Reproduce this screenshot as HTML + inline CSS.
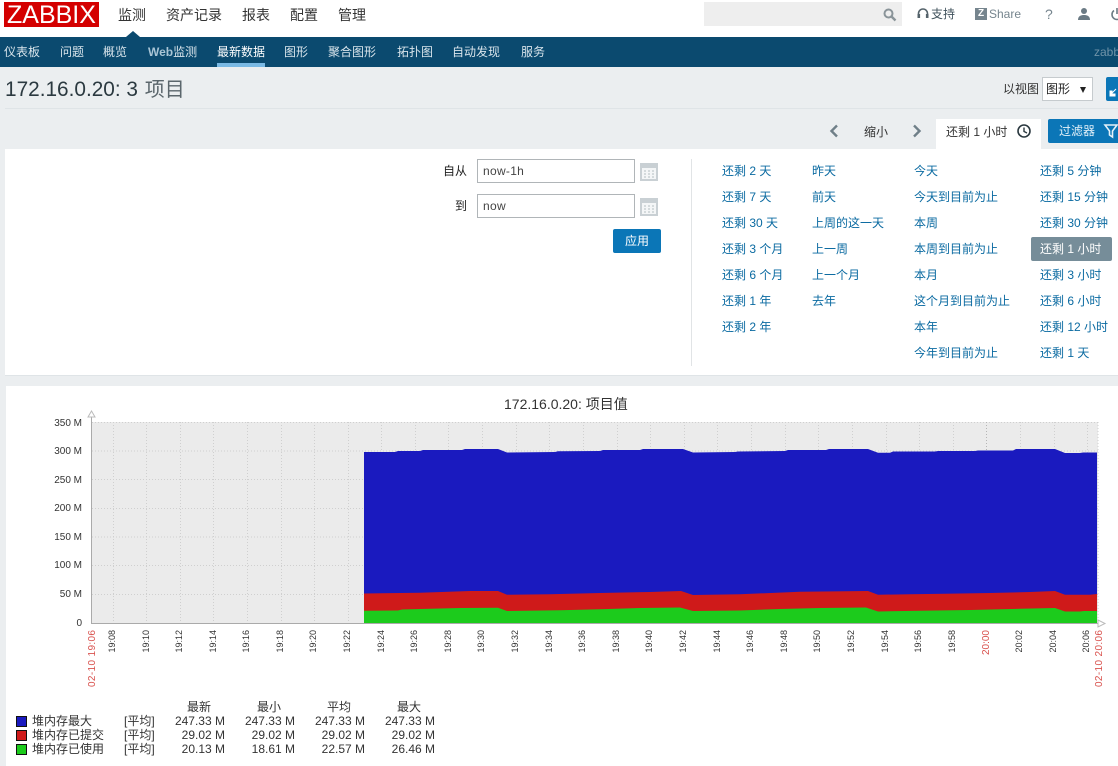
<!DOCTYPE html>
<html lang="zh"><head><meta charset="utf-8"><title>Zabbix</title>
<style>
html,body{margin:0;padding:0}
body{width:1118px;height:766px;overflow:hidden;position:relative;background:#ebeef0;font-family:"Liberation Sans","Noto Sans CJK SC",sans-serif;font-size:12px;color:#1f2c33}
.b{position:absolute}
.t{position:absolute;white-space:nowrap;line-height:16px}
.m{font-size:14px;color:#333;top:7px}
.n{color:#d8e4eb;top:44px}
.l{color:#0a6aa1}
.r{text-align:right;width:70px;color:#333}
svg{position:absolute;overflow:visible}
svg text{font-family:"Liberation Sans",sans-serif}
.i{position:absolute;box-sizing:border-box;background:#fff;border:1px solid #b0b5b8;width:158px;height:24px;left:477px;padding-left:5px;line-height:22px;color:#444;letter-spacing:.3px}
</style></head><body>

<div class="b" style="left:0;top:0;width:1118px;height:37px;background:#fff"></div>
<div class="b" style="left:4px;top:2px;width:95px;height:25px;background:#d40000"></div>
<div class="t" style="left:7px;top:3px;font-size:25px;line-height:25px;color:#fff">ZABBIX</div>
<div class="t m" style="left:118px">监测</div>
<div class="t m" style="left:166px">资产记录</div>
<div class="t m" style="left:242px">报表</div>
<div class="t m" style="left:290px">配置</div>
<div class="t m" style="left:338px">管理</div>

<div class="b" style="left:704px;top:2px;width:198px;height:24px;background:#eee"></div>
<svg style="left:883px;top:8px" width="14" height="14" viewBox="0 0 14 14"><circle cx="5.5" cy="5.5" r="4" fill="none" stroke="#8a9499" stroke-width="2"/><path d="M8.5 8.5L12.5 12.5" stroke="#8a9499" stroke-width="2.4"/></svg>
<svg style="left:917px;top:8px" width="12" height="12" viewBox="0 0 12 12"><path d="M1.5 8V5.5a4.5 4.5 0 0 1 9 0V8" fill="none" stroke="#55636b" stroke-width="1.6"/><rect x="0.5" y="6" width="2.6" height="4" fill="#55636b"/><rect x="8.9" y="6" width="2.6" height="4" fill="#55636b"/></svg>
<div class="t" style="left:931px;top:6px;color:#40525c">支持</div>
<div class="b" style="left:975px;top:8px;width:12px;height:12px;background:#76858e;color:#fff;font-size:10px;line-height:12px;text-align:center;font-weight:bold">Z</div>
<div class="t" style="left:989px;top:6px;color:#76858e">Share</div>
<div class="t" style="left:1045px;top:6px;color:#76858e;font-size:14px">?</div>
<svg style="left:1077px;top:7px" width="14" height="14" viewBox="0 0 14 14"><circle cx="7" cy="4" r="3" fill="#6a7a84"/><path d="M1 13c0-4 3-5 6-5s6 1 6 5z" fill="#6a7a84"/></svg>
<svg style="left:1110px;top:7px" width="14" height="14" viewBox="0 0 14 14"><path d="M4 3.5a5 5 0 1 0 6 0M7 1v6" fill="none" stroke="#6a7a84" stroke-width="1.6"/></svg>

<div class="b" style="left:0;top:37px;width:1118px;height:30px;background:#0b4a6f"></div>
<div class="b" style="left:126px;top:31px;width:0;height:0;border:7px solid transparent;border-top:0;border-bottom:6px solid #0b4a6f"></div>
<div class="t n" style="left:4px">仪表板</div>
<div class="t n" style="left:60px">问题</div>
<div class="t n" style="left:103px">概览</div>
<div class="t n" style="left:148px"><b style="color:#a9c5d6">Web</b>监测</div>
<div class="t n" style="left:217px;color:#fff">最新数据</div>
<div class="b" style="left:217px;top:63px;width:48px;height:4px;background:#7ab9e4"></div>
<div class="t n" style="left:284px">图形</div>
<div class="t n" style="left:328px">聚合图形</div>
<div class="t n" style="left:397px">拓扑图</div>
<div class="t n" style="left:452px">自动发现</div>
<div class="t n" style="left:521px">服务</div>
<div class="t n" style="left:1094px;color:#6f93a8">zabbix</div>

<div class="t" style="left:5px;top:78px;font-size:20.8px;line-height:24px;color:#2b3940">172.16.0.20: 3 <span style="color:#5b666c;font-size:20px;margin-left:1px">项目</span></div>
<div class="b" style="left:5px;top:108px;width:1113px;height:1px;background:#dfe4e7"></div>
<div class="t" style="left:1003px;top:81px;color:#333">以视图</div>
<div class="b" style="left:1042px;top:77px;width:51px;height:24px;box-sizing:border-box;background:#fff;border:1px solid #c6cbce"></div>
<div class="t" style="left:1046px;top:81px;color:#222">图形</div>
<div class="b" style="left:1080px;top:87px;width:0;height:0;border:3.5px solid transparent;border-bottom:0;border-top:6px solid #222"></div>
<div class="b" style="left:1106px;top:77px;width:14px;height:24px;background:#0b76b7;border-radius:2px 0 0 2px"></div>
<svg style="left:1109px;top:89px" width="8" height="8" viewBox="0 0 8 8"><path d="M1 2V7H6V5H3V2zM3 4L7 0" fill="#fff" stroke="#fff"/></svg>

<svg style="left:829px;top:124px" width="10" height="14" viewBox="0 0 10 14"><path d="M8 1.5L2.5 7L8 12.5" fill="none" stroke="#6f7f88" stroke-width="2.4"/></svg>
<div class="t" style="left:864px;top:124px;color:#333">缩小</div>
<svg style="left:912px;top:124px" width="10" height="14" viewBox="0 0 10 14"><path d="M2 1.5L7.5 7L2 12.5" fill="none" stroke="#6f7f88" stroke-width="2.4"/></svg>
<div class="b" style="left:936px;top:119px;width:105px;height:31px;background:#fff"></div>
<div class="t" style="left:946px;top:124px;color:#333">还剩 1 小时</div>
<svg style="left:1017px;top:124px" width="14" height="14" viewBox="0 0 14 14"><circle cx="7" cy="7" r="6" fill="none" stroke="#2b3940" stroke-width="1.6"/><path d="M7 3.5V7.5L10 9" fill="none" stroke="#2b3940" stroke-width="1.4"/></svg>
<div class="b" style="left:1048px;top:119px;width:70px;height:24px;background:#0b76b7;border-radius:2px 0 0 2px"></div>
<div class="t" style="left:1059px;top:123px;color:#e4f1f9">过滤器</div>
<svg style="left:1104px;top:124px" width="14" height="14" viewBox="0 0 14 14"><path d="M1 1H13L8.5 7V13L5.5 11V7z" fill="none" stroke="#e4f1f9" stroke-width="1.6"/></svg>

<div class="b" style="left:5px;top:149px;width:1113px;height:226px;background:#fff;border-bottom:1px solid #dfe4e7"></div>
<div class="t" style="left:443px;top:163px;color:#222">自从</div>
<div class="i" style="top:159px">now-1h</div>
<div class="t" style="left:455px;top:198px;color:#222">到</div>
<div class="i" style="top:194px">now</div>
<svg style="left:640px;top:163px" width="18" height="18" viewBox="0 0 18 18"><rect x="1" y="1" width="16" height="16" fill="#f4f6f7" stroke="#c9d0d4" stroke-width="2"/><rect x="0" y="0" width="18" height="5" fill="#c9d0d4"/><path d="M4 8h2M8 8h2M12 8h2M4 11h2M8 11h2M12 11h2M4 14h2M8 14h2M12 14h2" stroke="#c9d0d4" stroke-width="1.5"/></svg>
<svg style="left:640px;top:198px" width="18" height="18" viewBox="0 0 18 18"><rect x="1" y="1" width="16" height="16" fill="#f4f6f7" stroke="#c9d0d4" stroke-width="2"/><rect x="0" y="0" width="18" height="5" fill="#c9d0d4"/><path d="M4 8h2M8 8h2M12 8h2M4 11h2M8 11h2M12 11h2M4 14h2M8 14h2M12 14h2" stroke="#c9d0d4" stroke-width="1.5"/></svg>
<div class="b" style="left:613px;top:229px;width:48px;height:24px;background:#0b76b7;border-radius:2px;color:#fff;line-height:24px;text-align:center">应用</div>
<div class="b" style="left:691px;top:159px;width:1px;height:207px;background:#e1e4e6"></div>

<div class="t l" style="left:722px;top:163px">还剩 2 天</div>
<div class="t l" style="left:722px;top:189px">还剩 7 天</div>
<div class="t l" style="left:722px;top:215px">还剩 30 天</div>
<div class="t l" style="left:722px;top:241px">还剩 3 个月</div>
<div class="t l" style="left:722px;top:267px">还剩 6 个月</div>
<div class="t l" style="left:722px;top:293px">还剩 1 年</div>
<div class="t l" style="left:722px;top:319px">还剩 2 年</div>
<div class="t l" style="left:812px;top:163px">昨天</div>
<div class="t l" style="left:812px;top:189px">前天</div>
<div class="t l" style="left:812px;top:215px">上周的这一天</div>
<div class="t l" style="left:812px;top:241px">上一周</div>
<div class="t l" style="left:812px;top:267px">上一个月</div>
<div class="t l" style="left:812px;top:293px">去年</div>
<div class="t l" style="left:914px;top:163px">今天</div>
<div class="t l" style="left:914px;top:189px">今天到目前为止</div>
<div class="t l" style="left:914px;top:215px">本周</div>
<div class="t l" style="left:914px;top:241px">本周到目前为止</div>
<div class="t l" style="left:914px;top:267px">本月</div>
<div class="t l" style="left:914px;top:293px">这个月到目前为止</div>
<div class="t l" style="left:914px;top:319px">本年</div>
<div class="t l" style="left:914px;top:345px">今年到目前为止</div>
<div class="t l" style="left:1040px;top:163px">还剩 5 分钟</div>
<div class="t l" style="left:1040px;top:189px">还剩 15 分钟</div>
<div class="t l" style="left:1040px;top:215px">还剩 30 分钟</div>
<div class="b" style="left:1031px;top:237px;width:81px;height:24px;background:#768d99;border-radius:2px"></div>
<div class="t" style="left:1040px;top:241px;color:#fff">还剩 1 小时</div>
<div class="t l" style="left:1040px;top:267px">还剩 3 小时</div>
<div class="t l" style="left:1040px;top:293px">还剩 6 小时</div>
<div class="t l" style="left:1040px;top:319px">还剩 12 小时</div>
<div class="t l" style="left:1040px;top:345px">还剩 1 天</div>

<div class="b" style="left:6px;top:386px;width:1112px;height:380px;background:#fff"></div>
<div class="t" style="left:504px;top:396px;font-size:14px;color:#333">172.16.0.20: 项目值</div>

<svg style="left:0;top:0" width="1118" height="766" viewBox="0 0 1118 766">
<rect x="92" y="422" width="1006" height="201" fill="#ebebeb"/>
<g stroke="#cfcfcf" stroke-width="1" stroke-dasharray="1 2" fill="none">
<path d="M92 422.5H1098M92 451H1098M92 479.5H1098M92 508.5H1098M92 537H1098M92 565.5H1098M92 594.5H1098"/>
<path d="M113.5 422V623M146.5 422V623M180.5 422V623M213.5 422V623M247.5 422V623M281.5 422V623M314.5 422V623M348.5 422V623M381.5 422V623M415.5 422V623M448.5 422V623M482.5 422V623M516.5 422V623M549.5 422V623M583.5 422V623M617.5 422V623M650.5 422V623M684.5 422V623M717.5 422V623M751.5 422V623M785.5 422V623M818.5 422V623M852.5 422V623M886.5 422V623M919.5 422V623M953.5 422V623M1020.5 422V623M1054.5 422V623M1087.5 422V623M1098 422V623"/>
<path d="M986.5 422V623" stroke="#b5b5b5"/>
</g>
<path fill="#1a1abf" d="M364 452L395 452L398 451L420 451L423 450L462 450L465 449L498 449L507 452.5L555 452L558 451.2L600 451L603 450L640 450L643 449L683 449L693 452.5L735 452L738 451.5L785 451L788 450L826 450L829 449L868 449L878 452.7L890 452.7L893 451.5L935 451.5L938 451L975 451L978 450.5L1013 450.5L1016 449L1055 449L1065 453L1080 453L1083 452.5L1097 452.5V623H364z"/>
<path fill="#cf1a1a" d="M364 593.5L420 592.8L470 591L498 591L507 594.7L550 594.3L600 593L650 592L681 591L693 595L740 594.3L800 591.7L868 591L878 594.7L910 594.3L945 593.7L990 593L1030 592L1055 591L1065 594.7L1090 594.7L1097 594V623H364z"/>
<path fill="#1ccb1c" d="M364 610.7L398 610.5L402 609.5L420 609L460 608L498 607.7L507 611L560 610.3L600 609.2L640 608L680 607.5L693 611L740 610.5L780 609L820 608L866 607.5L878 611.5L920 610.7L970 610L1020 608.8L1055 608L1065 611.5L1080 611.5L1084 611L1097 611V623H364z"/>
<path d="M91.5 417V623.5H1100" fill="none" stroke="#aaa" stroke-width="1"/>
<path d="M88 417L91.5 411L95 417z" fill="#fff" stroke="#bbb"/>
<path d="M1098 620L1105 623.5L1098 627z" fill="#fff" stroke="#bbb"/>
<g font-size="10" fill="#333" text-anchor="end">
<text x="82" y="426">350 M</text><text x="82" y="454">300 M</text><text x="82" y="483">250 M</text><text x="82" y="511">200 M</text><text x="82" y="540">150 M</text><text x="82" y="568">100 M</text><text x="82" y="597">50 M</text><text x="82" y="626">0</text>
</g>
<g font-size="9" fill="#333" text-anchor="end">
<text transform="translate(115,630) rotate(-90)">19:08</text>
<text transform="translate(149,630) rotate(-90)">19:10</text>
<text transform="translate(182,630) rotate(-90)">19:12</text>
<text transform="translate(216,630) rotate(-90)">19:14</text>
<text transform="translate(249,630) rotate(-90)">19:16</text>
<text transform="translate(283,630) rotate(-90)">19:18</text>
<text transform="translate(316,630) rotate(-90)">19:20</text>
<text transform="translate(350,630) rotate(-90)">19:22</text>
<text transform="translate(384,630) rotate(-90)">19:24</text>
<text transform="translate(417,630) rotate(-90)">19:26</text>
<text transform="translate(451,630) rotate(-90)">19:28</text>
<text transform="translate(484,630) rotate(-90)">19:30</text>
<text transform="translate(518,630) rotate(-90)">19:32</text>
<text transform="translate(552,630) rotate(-90)">19:34</text>
<text transform="translate(585,630) rotate(-90)">19:36</text>
<text transform="translate(619,630) rotate(-90)">19:38</text>
<text transform="translate(652,630) rotate(-90)">19:40</text>
<text transform="translate(686,630) rotate(-90)">19:42</text>
<text transform="translate(720,630) rotate(-90)">19:44</text>
<text transform="translate(753,630) rotate(-90)">19:46</text>
<text transform="translate(787,630) rotate(-90)">19:48</text>
<text transform="translate(820,630) rotate(-90)">19:50</text>
<text transform="translate(854,630) rotate(-90)">19:52</text>
<text transform="translate(888,630) rotate(-90)">19:54</text>
<text transform="translate(921,630) rotate(-90)">19:56</text>
<text transform="translate(955,630) rotate(-90)">19:58</text>
<text transform="translate(1022,630) rotate(-90)">20:02</text>
<text transform="translate(1056,630) rotate(-90)">20:04</text>
<text transform="translate(1089,630) rotate(-90)">20:06</text>
</g>
<g font-size="10" fill="#d9534f" text-anchor="end">
<text transform="translate(989,630) rotate(-90)">20:00</text>
<text transform="translate(95,630) rotate(-90)" textLength="57">02-10 19:06</text>
<text transform="translate(1102,630) rotate(-90)" textLength="57">02-10 20:06</text>
</g>
<rect x="16.5" y="716.5" width="10" height="10" fill="#1a1abf" stroke="#111"/>
<rect x="16.5" y="730.5" width="10" height="10" fill="#cf1a1a" stroke="#111"/>
<rect x="16.5" y="744.5" width="10" height="10" fill="#1ccb1c" stroke="#111"/>
</svg>

<div class="t" style="left:187px;top:699px;color:#333">最新</div>
<div class="t" style="left:257px;top:699px;color:#333">最小</div>
<div class="t" style="left:327px;top:699px;color:#333">平均</div>
<div class="t" style="left:397px;top:699px;color:#333">最大</div>

<div class="t" style="left:32px;top:713px;color:#333">堆内存最大</div>
<div class="t" style="left:124px;top:713px;color:#333">[平均]</div>
<div class="t r" style="left:155px;top:713px">247.33 M</div>
<div class="t r" style="left:225px;top:713px">247.33 M</div>
<div class="t r" style="left:295px;top:713px">247.33 M</div>
<div class="t r" style="left:365px;top:713px">247.33 M</div>

<div class="t" style="left:32px;top:727px;color:#333">堆内存已提交</div>
<div class="t" style="left:124px;top:727px;color:#333">[平均]</div>
<div class="t r" style="left:155px;top:727px">29.02 M</div>
<div class="t r" style="left:225px;top:727px">29.02 M</div>
<div class="t r" style="left:295px;top:727px">29.02 M</div>
<div class="t r" style="left:365px;top:727px">29.02 M</div>

<div class="t" style="left:32px;top:741px;color:#333">堆内存已使用</div>
<div class="t" style="left:124px;top:741px;color:#333">[平均]</div>
<div class="t r" style="left:155px;top:741px">20.13 M</div>
<div class="t r" style="left:225px;top:741px">18.61 M</div>
<div class="t r" style="left:295px;top:741px">22.57 M</div>
<div class="t r" style="left:365px;top:741px">26.46 M</div>

</body></html>
